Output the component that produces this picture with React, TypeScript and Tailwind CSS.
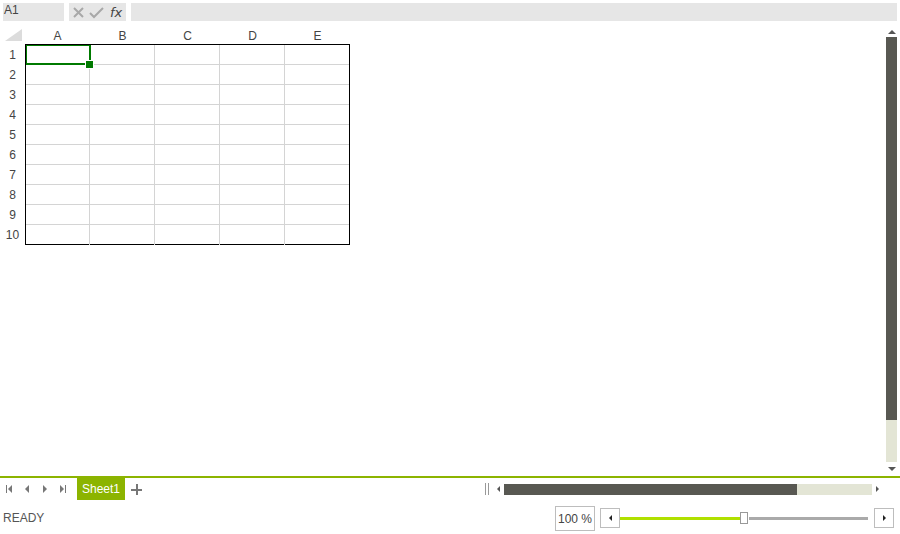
import React from 'react';

const COLS = ['A', 'B', 'C', 'D', 'E'];
const ROWS = [1, 2, 3, 4, 5, 6, 7, 8, 9, 10];

const Tri: React.FC<{ dir: 'up' | 'down' | 'left' | 'right'; size?: number; color?: string }> = ({
  dir,
  size = 4,
  color = '#555',
}) => {
  const s = size;
  const pts =
    dir === 'up'
      ? `0,${s} ${s},0 ${2 * s},${s}`
      : dir === 'down'
        ? `0,0 ${2 * s},0 ${s},${s}`
        : dir === 'left'
          ? `${s},0 ${s},${2 * s} 0,${s}`
          : `0,0 0,${2 * s} ${s},${s}`;
  const w = dir === 'up' || dir === 'down' ? 2 * s : s;
  const h = dir === 'up' || dir === 'down' ? s : 2 * s;
  return (
    <svg width={w} height={h} viewBox={`0 0 ${w} ${h}`} className="block">
      <polygon points={pts} fill={color} />
    </svg>
  );
};

const NavIcon: React.FC<{ kind: 'first' | 'prev' | 'next' | 'last' }> = ({ kind }) => (
  <svg width="8" height="8" viewBox="0 0 8 8" className="block">
    {kind === 'first' && (
      <>
        <rect x="1" y="0" width="1" height="8" fill="#777" />
        <polygon points="7,0 7,8 3,4" fill="#777" />
      </>
    )}
    {kind === 'prev' && <polygon points="6,0 6,8 2,4" fill="#777" />}
    {kind === 'next' && <polygon points="2,0 2,8 6,4" fill="#777" />}
    {kind === 'last' && (
      <>
        <polygon points="1,0 1,8 5,4" fill="#777" />
        <rect x="6" y="0" width="1" height="8" fill="#777" />
      </>
    )}
  </svg>
);

export default function App() {
  return (
    <div className="w-[900px] h-[534px] flex flex-col bg-white overflow-hidden font-['Liberation_Sans',Arial,sans-serif] text-[12px] text-[#333]">
      {/* formula bar */}
      <div className="h-[24px] flex items-start pt-[3px] pl-[3px] pr-[3px] shrink-0">
        <div className="w-[61px] h-[18px] bg-[#e6e6e6] pl-[1px] leading-[14px] text-[12px] text-[#444]">A1</div>
        <div className="ml-[5px] w-[57px] h-[18px] bg-[#e6e6e6] flex items-center pl-[3px] gap-[4px]">
          <svg width="13" height="13" viewBox="0 0 13 13">
            <path d="M2 2 L11 11 M11 2 L2 11" stroke="#a8a8a8" strokeWidth="2" />
          </svg>
          <svg width="15" height="13" viewBox="0 0 15 13">
            <path d="M1 7 L5 11 L14 2" stroke="#a8a8a8" strokeWidth="2" fill="none" />
          </svg>
          <span className="italic text-[13px] text-[#444] font-['DejaVu_Sans',sans-serif] leading-none ml-[2px]">fx</span>
        </div>
        <div className="ml-[5px] flex-1 h-[18px] bg-[#e6e6e6]" />
      </div>

      {/* sheet area */}
      <div className="h-[452px] flex shrink-0">
        <div className="flex-1 pt-[3px]">
          <div className="flex h-[17px]">
            <div className="w-[25px] relative">
              <svg width="17" height="12" viewBox="0 0 17 12" className="absolute left-[5px] top-[2px]">
                <polygon points="17,0 17,12 0,12" fill="#dcdcdc" />
              </svg>
            </div>
            {COLS.map((c) => (
              <div key={c} className="w-[65px] text-center text-[12px] leading-[17px] pt-[1px] text-[#444]">
                {c}
              </div>
            ))}
          </div>
          <div className="flex">
            <div className="w-[25px]">
              {ROWS.map((r) => (
                <div key={r} className="h-[20px] text-center text-[12px] leading-[20px] pt-[1px] text-[#444]">
                  {r}
                </div>
              ))}
            </div>
            <div className="relative w-[325px] h-[201px] border border-black">
              <div className="grid grid-cols-[64px_65px_65px_65px_64px]">
                {ROWS.map((r) =>
                  COLS.map((c, ci) => (
                    <div
                      key={`${r}${c}`}
                      className={`h-[20px] ${r < 10 ? 'border-b border-[#d4d4d4]' : ''} ${ci < 4 ? 'border-r border-[#d4d4d4]' : ''}`}
                    />
                  )),
                )}
              </div>
              {/* selection */}
              <div className="absolute left-0 top-0 w-[65px] h-[20px] border-t border-l border-r-2 border-b-2 border-[#007a00]" />
              <div className="absolute left-[60px] top-[16px] w-[7px] h-[7px] bg-[#007a00] border border-white box-content -translate-x-[1px] -translate-y-[1px]" />
            </div>
          </div>
        </div>

        {/* vertical scrollbar */}
        <div className="w-[11px] mr-[3px] flex flex-col items-center">
          <div className="h-[13px] shrink-0 flex items-end justify-center pb-[3px]">
            <Tri dir="up" size={4} color="#555" />
          </div>
          <div className="w-full h-[383px] shrink-0 bg-[#585852]" />
          <div className="w-full h-[42px] shrink-0 bg-[#e3e5d5]" />
          <div className="h-[14px] shrink-0 flex items-center justify-center">
            <Tri dir="down" size={4} color="#555" />
          </div>
        </div>
      </div>

      {/* sheet tab bar */}
      <div className="h-[2px] bg-[#8cb400] shrink-0" />
      <div className="h-[22px] flex items-center shrink-0">
        <div className="flex items-center pl-[5px] gap-[10px] w-[77px]">
          <NavIcon kind="first" />
          <NavIcon kind="prev" />
          <NavIcon kind="next" />
          <NavIcon kind="last" />
        </div>
        <div className="h-[22px] w-[48px] bg-[#8cb400] text-white text-[12px] leading-[22px] text-center">Sheet1</div>
        <div className="ml-[6px] w-[11px] h-[11px] relative">
          <div className="absolute left-0 top-[5px] w-[11px] h-[2px] bg-[#777]" />
          <div className="absolute left-[5px] top-0 w-[2px] h-[11px] bg-[#777]" />
        </div>
        <div className="flex-1" />
        <div className="flex items-center gap-[2px] h-[12px] mr-[8px]">
          <div className="w-px h-[12px] bg-[#999]" />
          <div className="w-px h-[12px] bg-[#999]" />
        </div>
        <Tri dir="left" size={3} color="#555" />
        <div className="ml-[4px] w-[368px] h-[11px] flex">
          <div className="w-[293px] bg-[#585852]" />
          <div className="flex-1 bg-[#e3e5d5]" />
        </div>
        <div className="ml-[4px] mr-[21px]">
          <Tri dir="right" size={3} color="#555" />
        </div>
      </div>

      {/* status bar */}
      <div className="h-[34px] shrink-0 flex items-center">
        <div className="pl-[3px] text-[12px] text-[#555] mt-[2px]">READY</div>
        <div className="flex-1" />
        <div className="w-[40px] h-[25px] border border-[#bdbdbd] text-[12px] text-[#444] flex items-center justify-center mt-[3px]">
          100 %
        </div>
        <div className="ml-[5px] w-[20px] h-[20px] border border-[#bdbdbd] flex items-center justify-center mt-[2px]">
          <Tri dir="left" size={3} color="#222" />
        </div>
        <div className="w-[249px] flex items-center mt-[2px]">
          <div className="w-[120px] h-[3px] bg-[#b0e000]" />
          <div className="w-[8px] h-[12px] bg-white border border-[#999]" />
          <div className="ml-[1px] w-[119px] h-[3px] bg-[#aaaaaa]" />
        </div>
        <div className="ml-[5px] mr-[6px] w-[20px] h-[20px] border border-[#bdbdbd] flex items-center justify-center mt-[2px]">
          <Tri dir="right" size={3} color="#222" />
        </div>
      </div>
    </div>
  );
}
